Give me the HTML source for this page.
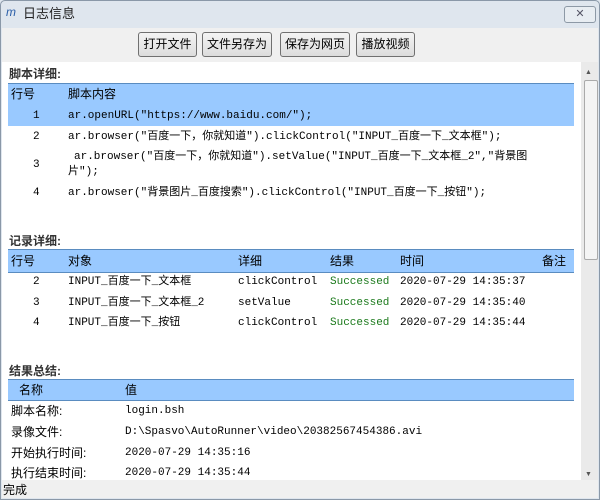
<html><head><style>
body{margin:0;width:600px;height:500px;overflow:hidden;background:#dfe6ee;font-family:"Liberation Sans","Noto Sans CJK SC",sans-serif;font-size:12px;color:#000;position:relative}
.a{position:absolute;white-space:nowrap;line-height:14px;height:14px}
.m{font-family:"Liberation Mono","Noto Sans CJK SC",monospace;font-size:11px}
.btn{position:absolute;top:32px;height:23px;border:1px solid #707070;border-radius:3px;background:linear-gradient(#f4f4f4,#dcdcdc);font-size:12px;line-height:23px;text-align:center}
.hd{position:absolute;left:8px;width:566px;background:#99c9ff;border-top:1px solid #5a8cc0;border-bottom:1px solid #5a8cc0}
.b{font-weight:bold;color:#333}
.g{color:#1c7a1c}
</style></head><body>
<div class="a" style="left:0;top:0;width:598px;height:498px;border:1px solid #8a98a8;border-radius:5px 5px 0 0"></div>
<div class="a" style="left:6px;top:5px;color:#2a5ea8;font-style:italic;font-size:12px">m</div>
<div class="a" style="left:23px;top:7px;font-size:13px;color:#222">日志信息</div>
<div class="a" style="left:564px;top:6px;width:30px;height:15px;border:1px solid #8d99a6;border-radius:3px;background:#e8edf2;text-align:center;font-size:11px;line-height:15px;color:#556">✕</div>
<div class="a" style="left:2px;top:28px;width:596px;height:34px;background:#f0f0f0"></div>
<div class="btn" style="left:138px;width:57px">打开文件</div>
<div class="btn" style="left:202px;width:68px">文件另存为</div>
<div class="btn" style="left:280px;width:68px">保存为网页</div>
<div class="btn" style="left:356px;width:57px">播放视频</div>
<div class="a" style="left:2px;top:62px;width:579px;height:418px;background:#fff"></div>
<div class="a" style="left:581px;top:62px;width:17px;height:418px;background:#eaeaea"></div>
<div class="a" style="left:584px;top:80px;width:12px;height:178px;background:#f4f4f4;border:1px solid #aaa;border-radius:2px"></div>
<div class="a" style="left:585px;top:66px;font-size:7px;color:#555">▲</div>
<div class="a" style="left:585px;top:468px;font-size:7px;color:#555">▼</div>
<div class="a" style="left:2px;top:480px;width:596px;height:18px;background:#f0f0f0"></div>
<div class="a" style="left:3px;top:483px">完成</div>

<div class="a b" style="left:9px;top:67px">脚本详细:</div>
<div class="hd" style="top:83px;height:21px"></div>
<div class="a" style="left:11px;top:87px">行号</div>
<div class="a" style="left:68px;top:87px">脚本内容</div>
<div class="a" style="left:8px;top:105px;width:566px;height:21px;background:#99c9ff"></div>
<div class="a m" style="left:33px;top:109px">1</div><div class="a m" style="left:68px;top:109px">ar.openURL("https://www.baidu.com/");</div>
<div class="a m" style="left:33px;top:130px">2</div><div class="a m" style="left:68px;top:130px">ar.browser("百度一下，你就知道").clickControl("INPUT_百度一下_文本框");</div>
<div class="a m" style="left:33px;top:158px">3</div><div class="a m" style="left:74px;top:150px">ar.browser("百度一下，你就知道").setValue("INPUT_百度一下_文本框_2","背景图</div>
<div class="a m" style="left:68px;top:165px">片");</div>
<div class="a m" style="left:33px;top:186px">4</div><div class="a m" style="left:68px;top:186px">ar.browser("背景图片_百度搜索").clickControl("INPUT_百度一下_按钮");</div>

<div class="a b" style="left:9px;top:234px">记录详细:</div>
<div class="hd" style="top:249px;height:22px"></div>
<div class="a" style="left:11px;top:254px">行号</div>
<div class="a" style="left:68px;top:254px">对象</div>
<div class="a" style="left:238px;top:254px">详细</div>
<div class="a" style="left:330px;top:254px">结果</div>
<div class="a" style="left:400px;top:254px">时间</div>
<div class="a" style="left:542px;top:254px">备注</div>
<div class="a m" style="left:33px;top:275px">2</div><div class="a m" style="left:68px;top:275px">INPUT_百度一下_文本框</div><div class="a m" style="left:238px;top:275px">clickControl</div><div class="a m g" style="left:330px;top:275px">Successed</div><div class="a m" style="left:400px;top:275px">2020-07-29 14:35:37</div>
<div class="a m" style="left:33px;top:296px">3</div><div class="a m" style="left:68px;top:296px">INPUT_百度一下_文本框_2</div><div class="a m" style="left:238px;top:296px">setValue</div><div class="a m g" style="left:330px;top:296px">Successed</div><div class="a m" style="left:400px;top:296px">2020-07-29 14:35:40</div>
<div class="a m" style="left:33px;top:316px">4</div><div class="a m" style="left:68px;top:316px">INPUT_百度一下_按钮</div><div class="a m" style="left:238px;top:316px">clickControl</div><div class="a m g" style="left:330px;top:316px">Successed</div><div class="a m" style="left:400px;top:316px">2020-07-29 14:35:44</div>

<div class="a b" style="left:9px;top:364px">结果总结:</div>
<div class="hd" style="top:379px;height:20px"></div>
<div class="a" style="left:19px;top:383px">名称</div>
<div class="a" style="left:125px;top:383px">值</div>
<div class="a" style="left:11px;top:404px">脚本名称:</div><div class="a m" style="left:125px;top:404px">login.bsh</div>
<div class="a" style="left:11px;top:425px">录像文件:</div><div class="a m" style="left:125px;top:425px">D:\Spasvo\AutoRunner\video\20382567454386.avi</div>
<div class="a" style="left:11px;top:446px">开始执行时间:</div><div class="a m" style="left:125px;top:446px">2020-07-29 14:35:16</div>
<div class="a" style="left:11px;top:466px">执行结束时间:</div><div class="a m" style="left:125px;top:466px">2020-07-29 14:35:44</div>
</body></html>
